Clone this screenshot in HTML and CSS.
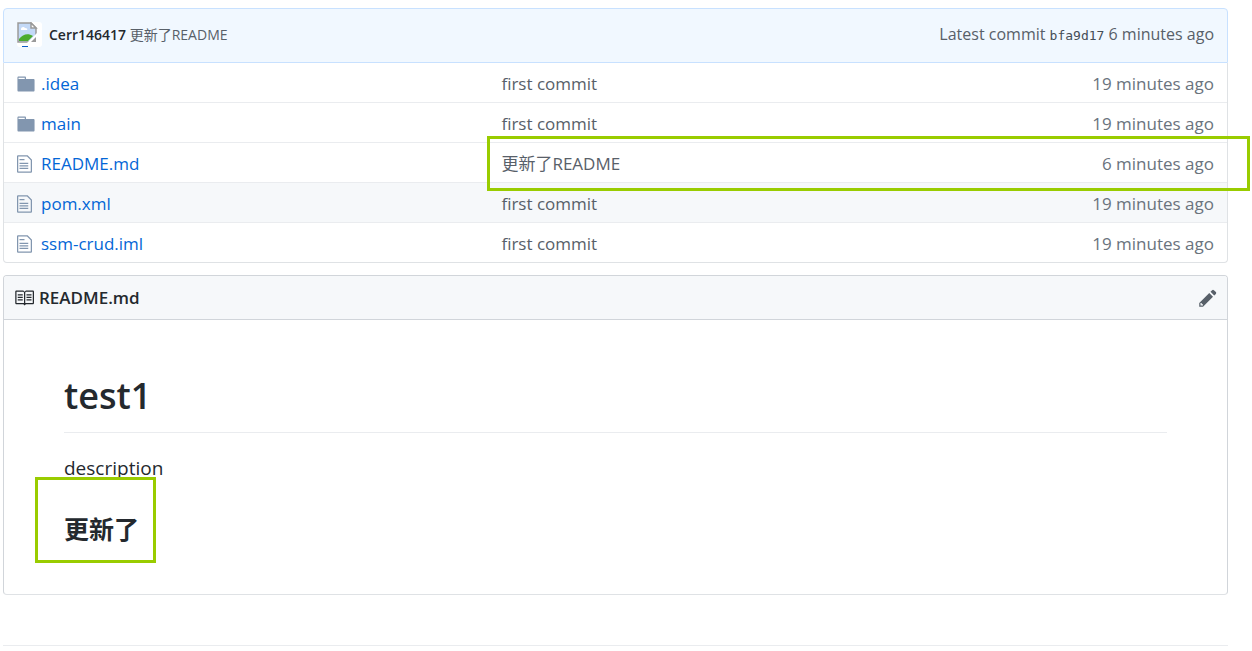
FILE: index.html
```html
<!DOCTYPE html>
<html lang="zh-CN">

<head>
    <meta charset="UTF-8" />
    <meta name="viewport" content="width=device-width, initial-scale=1" />
    <title>ssm-crud</title>
    <link rel="stylesheet" href="styles.css">
</head>

<body>
    <svg class="sprite" aria-hidden="true">
        <symbol id="folder" viewBox="0 0 14 16">
            <path d="M13 4H7V3c0-.66-.31-1-1-1H1c-.55 0-1 .45-1 1v10c0 .55.45 1 1 1h12c.55 0 1-.45 1-1V5c0-.55-.45-1-1-1zM6 4H1V3h5v1z" />
        </symbol>
        <symbol id="file" viewBox="0 0 12 16">
            <path d="M6 5H2V4h4v1zM2 8h7V7H2v1zm0 2h7V9H2v1zm0 2h7v-1H2v1zm10-7.5V14c0 .55-.45 1-1 1H1c-.55 0-1-.45-1-1V2c0-.55.45-1 1-1h7.5L12 4.5zM11 5L8 2H1v12h10V5z" />
        </symbol>
    </svg>

    <main class="container">
        <div class="commit-tease">
            <!-- avatar -->
            <svg class="avatar" viewBox="0 0 25 25" aria-hidden="true">
                <rect width="25" height="25" rx="3" fill="#fff" />
                <path d="M1 1h13l5 5v14H1z" fill="#c3d9f7" stroke="#9a9a9a" stroke-width="1.5" />
                <path d="M4 7c0-2 3-3 4-1 2 0 3 1 2 2H4z" fill="#fff" />
                <path d="M2 19v-2c4-5 9-6 14-3l-5 5z" fill="#4cab2e" />
                <path d="M14 1v5h5z" fill="#fff" stroke="#9a9a9a" stroke-width="1.5" />
                <path d="M10 21L21 10v11z" fill="#fff" />
                <path d="M19 15v5h-5z" fill="#9a9a9a" />
                <path d="M5 24h6v1H5z" fill="#0b5cc4" />
            </svg>
            <div class="commit-message"><a class="author" href="#">Cerr146417</a> <a href="#">更新了README</a></div>
            <div class="commit-latest">Latest commit <a class="sha" href="#">bfa9d17</a> 6 minutes ago</div>
        </div>

        <table class="files">
            <tbody>
                <tr>
                    <td class="icon"><svg class="octicon folder" viewBox="0 0 14 16"><use href="#folder" /></svg></td>
                    <td class="content"><a href="#">.idea</a></td>
                    <td class="message"><a href="#">first commit</a></td>
                    <td class="age">19 minutes ago</td>
                </tr>
                <tr>
                    <td class="icon"><svg class="octicon folder" viewBox="0 0 14 16"><use href="#folder" /></svg></td>
                    <td class="content"><a href="#">main</a></td>
                    <td class="message"><a href="#">first commit</a></td>
                    <td class="age">19 minutes ago</td>
                </tr>
                <tr class="marked">
                    <td class="icon"><svg class="octicon file" viewBox="0 0 12 16"><use href="#file" /></svg></td>
                    <td class="content"><a href="#">README.md</a></td>
                    <td class="message"><a href="#">更新了README</a></td>
                    <td class="age">6 minutes ago<span class="mark mark-row"></span></td>
                </tr>
                <tr class="active">
                    <td class="icon"><svg class="octicon file" viewBox="0 0 12 16"><use href="#file" /></svg></td>
                    <td class="content"><a href="#">pom.xml</a></td>
                    <td class="message"><a href="#">first commit</a></td>
                    <td class="age">19 minutes ago</td>
                </tr>
                <tr>
                    <td class="icon"><svg class="octicon file" viewBox="0 0 12 16"><use href="#file" /></svg></td>
                    <td class="content"><a href="#">ssm-crud.iml</a></td>
                    <td class="message"><a href="#">first commit</a></td>
                    <td class="age">19 minutes ago</td>
                </tr>
            </tbody>
        </table>

        <section class="readme">
            <div class="readme-header">
                <svg class="octicon book" viewBox="0 0 16 16" aria-hidden="true">
                    <path d="M3 5h4v1H3V5zm0 3h4V7H3v1zm0 2h4V9H3v1zm11-5h-4v1h4V5zm0 2h-4v1h4V7zm0 2h-4v1h4V9zm2-6v9c0 .55-.45 1-1 1H9.5l-1 1-1-1H2c-.55 0-1-.45-1-1V3c0-.55.45-1 1-1h5.5l1 1 1-1H15c.55 0 1 .45 1 1zm-8 .5L7.5 3H2v9h6V3.5zm7-.5H9.5l-.5.5V12h6V3z" />
                </svg>
                <h2>README.md</h2>
                <button class="edit" type="button" aria-label="Edit">
                    <svg class="octicon pencil" viewBox="0 0 14 16">
                        <path d="M0 12v3h3l8-8-3-3-8 8zm3 2H1v-2h1v1h1v1zm10.3-9.3L12 6 9 3l1.3-1.3a.996.996 0 0 1 1.41 0l1.59 1.59c.39.39.39 1.02 0 1.41z" />
                    </svg>
                </button>
            </div>
            <article class="markdown">
                <h1>test1</h1>
                <p>description</p>
                <h3>更新了<span class="mark mark-title"></span></h3>
            </article>
        </section>

        <hr class="footer-line">
    </main>
</body>

</html>
```

FILE: styles.css
```css
* {
    box-sizing: border-box;
}

body {
    margin: 0;
    font-family: "Open Sans", "Noto Sans CJK SC", sans-serif;
    font-size: 17px;
    line-height: 24px;
    color: #24292e;
    background: #fff;
}

a {
    color: inherit;
    text-decoration: none;
}

a:hover {
    text-decoration: underline;
}

.sprite {
    display: none;
}

.container {
    padding: 8px 24px 0 3px;
}

.octicon {
    display: block;
    height: 20px;
    fill: currentColor;
}

.folder,
.pencil {
    width: 18px;
}

.file {
    width: 15px;
}

.book {
    width: 20px;
}

/* latest commit bar */
.commit-tease {
    display: flex;
    align-items: center;
    height: 55px;
    padding: 0 13px 2px 13px;
    font-size: 14px;
    color: #586069;
    background: #f1f8ff;
    border: 1px solid #c8e1ff;
    border-radius: 4px 4px 0 0;
}

.avatar {
    width: 25px;
    height: 25px;
    margin-right: 7px;
}

.author {
    font-weight: 600;
    color: #24292e;
}

.commit-latest {
    margin-left: auto;
    font-size: 16px;
}

.sha {
    font-family: "DejaVu Sans Mono", monospace;
    font-size: 13px;
    color: #444d56;
}

/* file list */
.files {
    width: 100%;
    table-layout: fixed;
    border-collapse: separate;
    border-spacing: 0;
    border: 1px solid #dfe2e5;
    border-top: 0;
    border-radius: 0 0 4px 4px;
}

.files td {
    height: 40px;
    padding: 2px 0 0;
    border-bottom: 1px solid #eaecef;
}

.files tr:last-child td {
    height: 39px;
    border-bottom: 0;
}

.files .icon {
    width: 37px;
    padding-left: 13px;
    color: #8296af;
}

.files .content {
    width: 36.5%;
    color: #0366d6;
}

.files .message {
    padding-left: 14px;
    color: #586069;
}

.files .age {
    padding-right: 13px;
    text-align: right;
    color: #6a737d;
}

.active {
    background: #f6f8fa;
}

.marked {
    position: relative;
}

/* green frames */
.mark {
    position: absolute;
    border: 3px solid #9c0;
    pointer-events: none;
}

.mark-row {
    top: -7px;
    right: -23px;
    bottom: -8px;
    left: calc(36.5% + 37px);
}

.mark-title {
    top: -36px;
    left: -29px;
    width: 121px;
    height: 86px;
}

/* readme */
.readme {
    margin-top: 12px;
    border: 1px solid #d1d5da;
    border-bottom-color: #dfe2e5;
    border-radius: 4px;
}

.readme-header {
    display: flex;
    align-items: center;
    gap: 5px;
    height: 44px;
    padding: 0 10px;
    background: #f6f8fa;
    border-bottom: 1px solid #d1d5da;
    border-radius: 3px 3px 0 0;
}

.readme-header h2 {
    margin: 0;
    font-size: 17px;
    font-weight: 600;
}

.edit {
    margin-left: auto;
    padding: 0;
    color: #586069;
    background: none;
    border: 0;
    cursor: pointer;
}

.markdown {
    padding: 50px 60px 49px;
}

.markdown h1 {
    margin: 0 0 20px;
    padding-bottom: 10px;
    font-size: 36px;
    font-weight: 600;
    line-height: 52px;
    border-bottom: 1px solid #eaecef;
}

.markdown p {
    margin: 0 0 30px;
    font-size: 19px;
    line-height: 30px;
}

.markdown h3 {
    position: relative;
    margin: 0;
    font-size: 25px;
    font-weight: 700;
    line-height: 32px;
}

.footer-line {
    height: 1px;
    margin: 50px 0 0;
    background: #eaecef;
    border: 0;
}
```
